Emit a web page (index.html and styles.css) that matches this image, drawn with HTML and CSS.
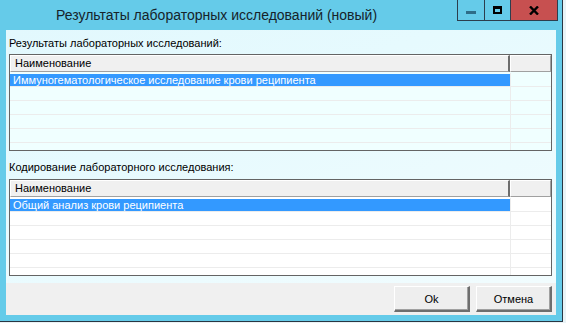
FILE: index.html
```html
<!DOCTYPE html>
<html lang="ru">
<head>
    <meta charset="UTF-8">
    <title>Результаты лабораторных исследований (новый)</title>
    <link rel="stylesheet" href="styles.css">
</head>
<body>
    <div class="window">
        <div class="titlebar">
            <div class="title">Результаты лабораторных исследований (новый)</div>
            <div class="caption-buttons">
                <div class="cap-btn cap-min"><span class="min-glyph"></span></div>
                <div class="cap-btn cap-max"><span class="max-glyph"></span></div>
                <div class="cap-btn cap-close">
                    <svg width="10" height="9" viewBox="0 0 10 9">
                        <path d="M1 0.5 L9 8.5 M9 0.5 L1 8.5" stroke="#000" stroke-width="2.4" fill="none"/>
                    </svg>
                </div>
            </div>
        </div>

        <div class="client">
            <div class="upper">
                <div class="label">Результаты лабораторных исследований:</div>
                <div class="grid grid-azure">
                    <div class="grid-head">
                        <div class="head-cell head-name">Наименование</div>
                        <div class="head-cell head-extra"></div>
                    </div>
                    <div class="grid-row">
                        <div class="cell cell-name"><span class="sel">Иммуногематологическое исследование крови реципиента</span></div>
                        <div class="cell cell-extra"></div>
                    </div>
                    <div class="grid-row"><div class="cell cell-name"></div><div class="cell cell-extra"></div></div>
                    <div class="grid-row"><div class="cell cell-name"></div><div class="cell cell-extra"></div></div>
                    <div class="grid-row"><div class="cell cell-name"></div><div class="cell cell-extra"></div></div>
                    <div class="grid-row"><div class="cell cell-name"></div><div class="cell cell-extra"></div></div>
                    <div class="grid-row"><div class="cell cell-name"></div><div class="cell cell-extra"></div></div>
                </div>

                <div class="label label-second">Кодирование лабораторного исследования:</div>
                <div class="grid grid-white">
                    <div class="grid-head">
                        <div class="head-cell head-name">Наименование</div>
                        <div class="head-cell head-extra"></div>
                    </div>
                    <div class="grid-row">
                        <div class="cell cell-name"><span class="sel">Общий анализ крови реципиента</span></div>
                        <div class="cell cell-extra"></div>
                    </div>
                    <div class="grid-row"><div class="cell cell-name"></div><div class="cell cell-extra"></div></div>
                    <div class="grid-row"><div class="cell cell-name"></div><div class="cell cell-extra"></div></div>
                    <div class="grid-row"><div class="cell cell-name"></div><div class="cell cell-extra"></div></div>
                    <div class="grid-row"><div class="cell cell-name"></div><div class="cell cell-extra"></div></div>
                    <div class="grid-row"><div class="cell cell-name"></div><div class="cell cell-extra"></div></div>
                </div>
            </div>

            <div class="button-bar">
                <button class="btn">Ok</button>
                <button class="btn">Отмена</button>
            </div>
        </div>
    </div>
</body>
</html>
```

FILE: styles.css
```css
* {
    margin: 0;
    padding: 0;
    box-sizing: border-box;
}

body {
    background: #e9f3f6;
    font-family: 'Liberation Sans', Arial, sans-serif;
    font-size: 11px;
    color: #000;
}

.window {
    width: 563px;
    height: 322px;
    background: #65cbe9;
    border-right: 1px solid #2a3642;
    border-bottom: 1px solid #2a3642;
    padding: 0 6px 6px 6px;
    display: flex;
    flex-direction: column;
}

/* title bar */
.titlebar {
    height: 30px;
    display: flex;
    align-items: flex-start;
}

.title {
    flex: 1;
    padding: 7px 0 0 50px;
    font-family: 'Liberation Sans', Arial, sans-serif;
    font-size: 14px;
    color: #16232a;
}

.caption-buttons {
    display: flex;
    height: 21px;
    margin-right: -2px;
    border: 1px solid #2c3e4e;
    border-top: none;
}

.cap-btn {
    height: 20px;
    display: flex;
    align-items: center;
    justify-content: center;
}

.cap-min {
    width: 27px;
    border-right: 1px solid #2c3e4e;
}

.cap-max {
    width: 26px;
    border-right: 1px solid #2c3e4e;
}

.cap-close {
    width: 46px;
    background: #c75050;
}

.min-glyph {
    display: block;
    width: 10px;
    height: 3px;
    margin-top: 4px;
    background: #2e6d88;
}

.max-glyph {
    display: block;
    width: 9px;
    height: 8px;
    border: 2px solid #000;
    border-top-width: 3px;
}

/* client area */
.client {
    flex: 1;
    display: flex;
    flex-direction: column;
    background: #f0f0f0;
}

.upper {
    background: linear-gradient(160deg, #e2f8fd 0%, #e6fafe 35%, #f1fcfe 100%);
    padding: 5px 4px 7px 3px;
}

.label {
    height: 19px;
    padding-top: 2px;
    line-height: 13px;
}

.label-second {
    height: 28px;
    padding-top: 10px;
}

/* data grids */
.grid {
    height: 97px;
    border: 1px solid #646464;
    overflow: hidden;
}

.grid-azure {
    background: #f0ffff;
}

.grid-white {
    background: #fff;
}

.grid-head {
    display: flex;
    height: 17px;
    margin-bottom: 1px;
}

.head-cell {
    background: #f0f0f0;
    border-top: 1px solid #fff;
    border-left: 1px solid #fff;
    border-right: 1px solid #a0a0a0;
    border-bottom: 1px solid #a0a0a0;
    line-height: 15px;
}

.head-name {
    width: 500px;
    padding-left: 4px;
    border-right: 2px solid #6d6d6d;
}

.head-extra {
    flex: 1;
}

.grid-row {
    display: flex;
    height: 14px;
    border-bottom: 1px solid #ececec;
}

.cell {
    height: 13px;
}

.cell-name {
    width: 500px;
    padding-top: 1px;
}

.cell-extra {
    flex: 1;
    border-left: 1px solid #ececec;
}

.sel {
    display: block;
    height: 12px;
    padding-left: 3px;
    line-height: 12px;
    background: #3399ff;
    color: #fff;
}

/* buttons */
.button-bar {
    flex: 1;
    display: flex;
    justify-content: flex-end;
    align-items: flex-start;
    gap: 6px;
    padding: 3px 4px 0 0;
}

.btn {
    width: 76px;
    height: 26px;
    background: #eeeeee;
    border: 1px solid #fff;
    border-right: 2px solid #6e6e6e;
    border-bottom: 2px solid #6e6e6e;
    box-shadow: inset -1px -1px 0 #a0a0a0;
    font-family: 'Liberation Sans', Arial, sans-serif;
    font-size: 11px;
    color: #000;
}
```
